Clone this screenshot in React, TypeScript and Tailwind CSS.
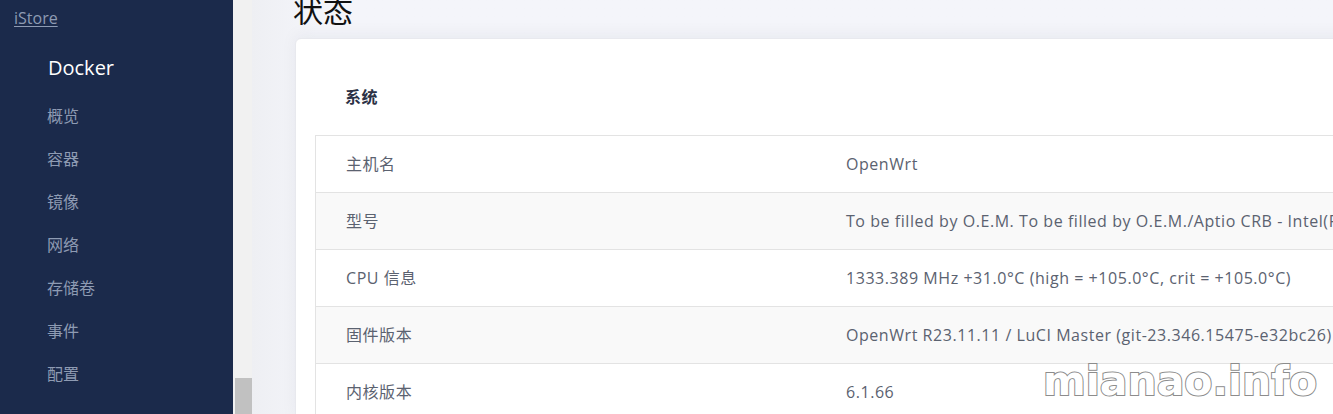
const font = "font-['Open_Sans','Noto_Sans_CJK_SC',sans-serif]"

const menu = ['概览', '容器', '镜像', '网络', '存储卷', '事件', '配置']

const rows = [
  { label: '主机名', value: 'OpenWrt' },
  { label: '型号', value: 'To be filled by O.E.M. To be filled by O.E.M./Aptio CRB - Intel(R) Celeron(R) CPU J1900 @ 1.99GHz' },
  { label: 'CPU 信息', value: '1333.389 MHz +31.0°C (high = +105.0°C, crit = +105.0°C)' },
  { label: '固件版本', value: 'OpenWrt R23.11.11 / LuCI Master (git-23.346.15475-e32bc26)' },
  { label: '内核版本', value: '6.1.66' },
]

function Sidebar() {
  return (
    <aside className="w-[233px] shrink-0 bg-[#1b2a4b] flex flex-col">
      <div className="h-[36px] flex items-center pl-[14px]">
        <a className="text-[16px] text-[#8e9bb3] underline underline-offset-2">iStore</a>
      </div>
      <div className="pl-[48px] mt-[18px] mb-[12px] leading-[28px] text-[20px] text-white">Docker</div>
      {menu.map(m => (
        <div key={m} className="h-[43px] flex items-center pl-[47px] text-[16px] text-[#8e9bb3]">
          {m}
        </div>
      ))}
    </aside>
  )
}

export default function App() {
  return (
    <div className={`${font} relative h-[414px] w-[1333px] overflow-hidden flex`}>
      <Sidebar />
      {/* scrollbar */}
      <div className="w-[19px] shrink-0 bg-[#f1f1f1] flex flex-col justify-end pl-[2px]">
        <div className="h-[36px] bg-[#c1c1c1]" />
      </div>
      <main className="flex-1 min-w-0 overflow-hidden bg-linear-to-r from-[#eeeff3] to-[#f4f5fa] to-[6%] pl-[41px]">
        <h1 className="-mt-[4px] mb-[12px] leading-[30px] text-[30px] text-[#111] font-normal">状态</h1>
        <div className="ml-[2px] w-[1200px] bg-white rounded-tl-[6px] border border-[#e8e9ee] shadow-[0_-4px_16px_rgba(20,30,60,0.05)] px-[19px]">
          <div className="pt-[48px] pb-[28px] leading-[20px] pl-[30px] text-[16px] font-bold tracking-[0.5px] text-[#2b3145]">系统</div>
          <div className="border-l border-[#e3e3e3]">
            {rows.map((r, i) => (
              <div
                key={r.label}
                className={`h-[57px] flex items-center border-t border-[#e3e3e3] text-[16px] tracking-[0.55px] text-[#5b6270] ${i % 2 === 1 ? 'bg-[#f9f9f9]' : 'bg-white'}`}
              >
                <div className="w-[500px] shrink-0 px-[30px]">{r.label}</div>
                <div className="px-[30px] whitespace-nowrap">{r.value}</div>
              </div>
            ))}
          </div>
        </div>
      </main>
      {/* watermark */}
      <div className="absolute left-[1043px] top-[353px] font-['DejaVu_Sans',sans-serif] font-bold text-[41px] leading-[56px] text-white [-webkit-text-stroke:2px_#8c8c8c] [paint-order:stroke_fill] pointer-events-none">
        mianao.info
      </div>
    </div>
  )
}
